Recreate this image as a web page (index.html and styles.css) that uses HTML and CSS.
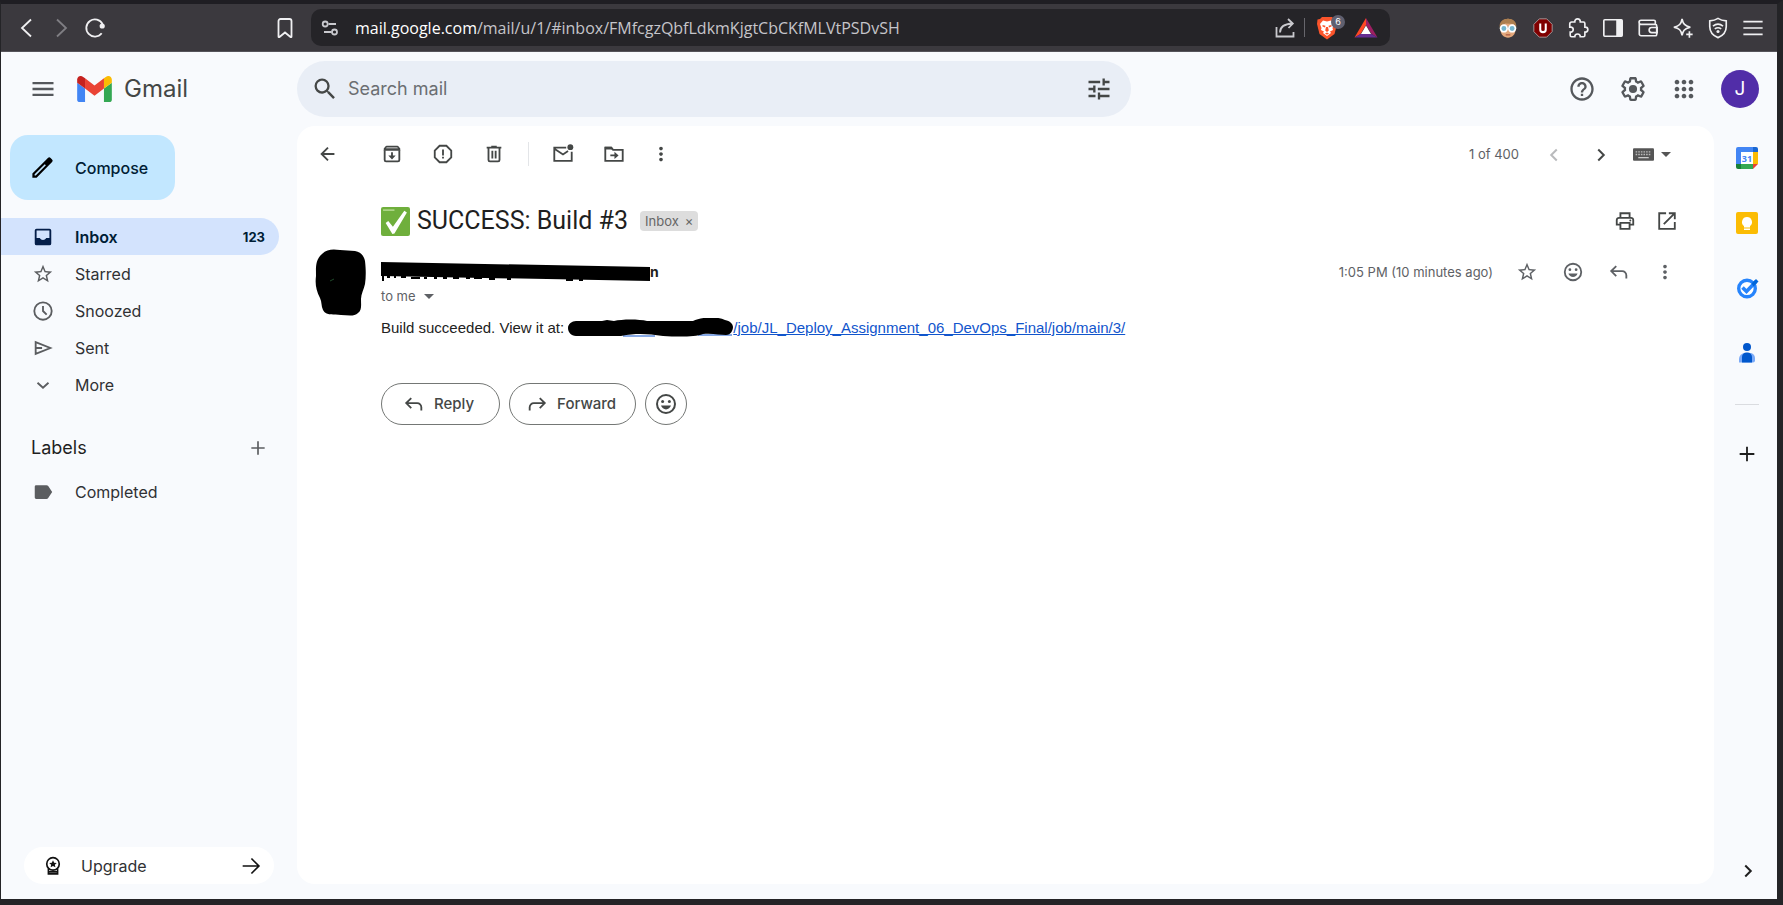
FILE: index.html
```html
<!DOCTYPE html>
<html lang="en">
<head>
<meta charset="utf-8">
<title>SUCCESS: Build #3 - Gmail</title>
<link rel="stylesheet" href="styles.css">
</head>
<body>
<svg class="sprite" aria-hidden="true">
  <symbol id="menu" viewBox="0 0 24 24"><path d="M3 18h18v-2H3v2zm0-5h18v-2H3v2zm0-7v2h18V6H3z"/></symbol>
  <symbol id="search" viewBox="0 0 24 24"><path d="M15.5 14h-.79l-.28-.27A6.471 6.471 0 0 0 16 9.5 6.5 6.5 0 1 0 9.5 16c1.61 0 3.09-.59 4.23-1.57l.27.28v.79l5 4.99L20.49 19l-4.99-5zm-6 0C7.01 14 5 11.99 5 9.5S7.01 5 9.5 5 14 7.01 14 9.5 11.99 14 9.5 14z"/></symbol>
  <symbol id="tune" viewBox="0 0 24 24"><path d="M3 17v2h6v-2H3zM3 5v2h10V5H3zm10 16v-2h8v-2h-8v-2h-2v6h2zM7 9v2H3v2h4v2h2V9H7zm14 4v-2H11v2h10zm-6-4h2V7h4V5h-4V3h-2v6z"/></symbol>
  <symbol id="star" viewBox="0 0 24 24"><path d="M22 9.24l-7.19-.62L12 2 9.19 8.63 2 9.24l5.46 4.73L5.82 21 12 17.27 18.18 21l-1.63-7.03L22 9.24zM12 15.4l-3.76 2.27 1-4.28-3.32-2.88 4.38-.38L12 6.1l1.71 4.04 4.38.38-3.32 2.88 1 4.28L12 15.4z"/></symbol>
  <symbol id="smile" viewBox="0 0 24 24"><circle cx="12" cy="12" r="9" fill="none" stroke="currentColor" stroke-width="2"/><circle cx="8.6" cy="9.5" r="1.5"/><circle cx="15.4" cy="9.5" r="1.5"/><path d="M7 13.6h10c-.8 2.3-2.7 3.9-5 3.9s-4.200-1.600-5-3.900z"/></symbol>
  <symbol id="reply" viewBox="0 0 24 24"><path d="M9 5.500L3.500 11 9 16.500M4 11h11.500a4.500 4.500 0 0 1 4.500 4.500V19" fill="none" stroke="currentColor" stroke-width="2"/></symbol>
  <symbol id="dots" viewBox="0 0 24 24"><path d="M12 8c1.100 0 2-.9 2-2s-.9-2-2-2-2 .9-2 2 .9 2 2 2zm0 2c-1.100 0-2 .9-2 2s.9 2 2 2 2-.9 2-2-.9-2-2-2zm0 6c-1.100 0-2 .9-2 2s.9 2 2 2 2-.9 2-2-.9-2-2-2z"/></symbol>
  <symbol id="right" viewBox="0 0 24 24"><path d="M9 6l6 6-6 6" fill="none" stroke="currentColor" stroke-width="2.200"/></symbol>
  <symbol id="plus" viewBox="0 0 24 24"><path d="M12 4v16M4 12h16" fill="none" stroke="currentColor" stroke-width="2"/></symbol>
  <symbol id="caret" viewBox="0 0 10 5"><path d="M0 0h10L5 5z"/></symbol>
</svg>

<header class="browser">
  <nav class="browser-nav">
    <button class="ib" aria-label="Back"><svg viewBox="0 0 24 24"><path class="ln" d="M16 3.500L7 12l9 8.500"/></svg></button>
    <button class="ib dim" aria-label="Forward"><svg viewBox="0 0 24 24"><path class="ln" d="M8 3.500l9 8.500-9 8.500"/></svg></button>
    <button class="ib" aria-label="Reload"><svg viewBox="0 0 24 24"><path class="ln" d="M18.700 17.300A8.600 8.600 0 1 1 19.600 8.200"/><circle cx="19.200" cy="10" r="2.600"/></svg></button>
  </nav>
  <button class="ib bookmark" aria-label="Bookmark"><svg viewBox="0 0 24 24"><path class="ln" d="M5.500 5a2 2 0 0 1 2-2h9a2 2 0 0 1 2 2v15.500a.6.6 0 0 1-1 .5L12 16.500 6.500 21a.6.6 0 0 1-1-.5z"/></svg></button>
  <div class="address">
    <button class="ib soft" aria-label="Site settings"><svg viewBox="0 0 24 24"><path class="ln" d="M10.500 8H18M6 16h7.500"/><circle class="ln" cx="7.200" cy="8" r="2.500"/><circle class="ln" cx="16.500" cy="16" r="2.500"/></svg></button>
    <p class="url"><b>mail.google.com</b>/mail/u/1/#inbox/FMfcgzQbfLdkmKjgtCbCKfMLVtPSDvSH</p>
    <button class="ib soft" aria-label="Share"><svg viewBox="0 0 24 24"><path class="ln" d="M3.500 11v9.500h17V16M7 16.500c0-5 3.500-8.500 12.500-9M15 3l4.800 4.500L15.500 12"/></svg></button>
    <span class="address-line"></span>
    <button class="ib shield" aria-label="Brave Shields"><svg viewBox="0 0 24 24"><path fill="#fb542b" d="M7 1h10l2 2 2.500.5L22 8l-2.500 10L12 23.500 4.500 18 2 8l.5-4.500L5 3z"/><path fill="#fff" d="M8 4.500l4 1 4-1 3 3.500-1.500 4 .5 2-3 1.500 1 1.500-4 3-4-3 1-1.500L6 14l.5-2L5 8z"/><path fill="#fb542b" d="M7.500 9l3 .8-.5 1.700-2.500-1zM16.500 9l-3 .8.500 1.700 2.500-1zM11 11h2l.8 3.500L12 16l-1.800-1.500zM10 17.500l2-1 2 1-2 1.300z"/></svg><span class="badge">6</span></button>
    <button class="ib" aria-label="Brave Rewards"><svg viewBox="0 0 24 24"><path fill="#ff4724" d="M12 2L.5 21.500l6-3.500L12 9z"/><path fill="#9e1f63" d="M12 2l11.500 19.500-6-3.500L12 9z"/><path fill="#662d91" d="M.5 21.500h23l-6-3.500h-11z"/><path fill="#fff" d="M12 9.500l5 8.500H7z"/></svg></button>
  </div>
  <nav class="extensions">
    <button class="ib" aria-label="Avatar extension"><svg viewBox="0 0 24 24"><path fill="#e3a87c" d="M4 9a8 7 0 0 1 16 0v6c0 4-3.500 7.500-8 7.500S4 19 4 15z"/><path fill="#ad7f4f" d="M3 12C2 5 6.500 2 12 2s10 3 9 10l-3-4.500-9-.5z"/><path fill="#555" d="M2 10.500h20v2.500H2z"/><circle cx="7.500" cy="12.500" r="3.600" fill="#75b6cf" stroke="#fff" stroke-width="1.800"/><circle cx="16.500" cy="12.500" r="3.600" fill="#75b6cf" stroke="#fff" stroke-width="1.800"/><path d="M9.500 19.500h5" stroke="#a34d39" stroke-width="1.200"/></svg></button>
    <button class="ib" aria-label="uBlock Origin"><svg viewBox="0 0 24 24"><path fill="#800000" stroke="#a7a0a2" d="M8 2h8l6 6v8l-6 6H8l-6-6V8z"/><path fill="none" stroke="#fff" stroke-width="2.200" d="M9 7v6.500a3 3 0 0 0 6 0V7"/></svg></button>
    <button class="ib" aria-label="Extensions"><svg viewBox="0 0 24 24"><path class="ln" d="M3 7.500a2 2 0 0 1 2-2h3.500V5a3 3 0 0 1 6 0v.5H18a1.500 1.500 0 0 1 1.500 1.500v4h.5a2.500 2.500 0 0 1 0 5.500h-.5V20a1.500 1.500 0 0 1-1.500 1.500h-3.500a3 3 0 0 0-6 0H5A1.500 1.500 0 0 1 3.500 20v-3.500h1a2.800 2.800 0 0 0 0-5.500H3z"/></svg></button>
    <button class="ib" aria-label="Side panel"><svg viewBox="0 0 24 24"><rect class="ln" x="2" y="3" width="20" height="18" rx="1"/><path d="M15.500 3H22v18h-6.500z"/></svg></button>
    <button class="ib" aria-label="Wallet"><svg viewBox="0 0 24 24"><path class="ln" d="M20 8V5a1.500 1.500 0 0 0-1.500-1.500H4.500a2 2 0 0 0 0 4.500H20a1.500 1.500 0 0 1 1.500 1.500V19a1.500 1.500 0 0 1-1.500 1.500H4.500a2 2 0 0 1-2-2V6M22 11.500h-6a2.500 2.500 0 0 0 0 5.500h6z"/></svg></button>
    <button class="ib" aria-label="Leo AI"><svg viewBox="0 0 24 24"><path class="ln" d="M11 2c1 5.500 3 7.700 9 9.200-3.500.8-5.500 1.800-6.800 3.300-1.200 1.500-1.700 3-2.200 5.500-1-5.500-3-7.700-9-8.800 6-1.200 8-3.700 9-9.200z"/><path class="ln" d="M19 15.500v7M15.500 19h7"/></svg></button>
    <button class="ib" aria-label="VPN"><svg viewBox="0 0 24 24"><path class="ln" d="M12 1.500c2.500 1.600 5.500 2.500 9 2.800v6c0 6.200-3.500 9.900-9 12.200-5.500-2.300-9-6-9-12.200v-6c3.500-.3 6.500-1.200 9-2.800z"/><path class="ln" d="M6.500 10c3.500-2.700 7.500-2.700 11 0M8.500 13c2.300-1.700 4.700-1.700 7 0"/><circle cx="12" cy="15.800" r="1.700"/></svg></button>
    <button class="ib" aria-label="Browser menu"><svg viewBox="0 0 24 24"><path class="ln" d="M1.500 5h21M1.500 12h21M1.500 19h21"/></svg></button>
  </nav>
</header>

<div class="app">
  <header class="top">
    <div class="brand">
      <button class="ib i28" aria-label="Main menu"><svg><use href="#menu"/></svg></button>
      <a class="logo" href="#inbox"><svg viewBox="52 42 88 66" aria-hidden="true"><path fill="#4285f4" d="M58 108h14V74L52 59v43c0 3.320 2.690 6 6 6"/><path fill="#34a853" d="M120 108h14c3.320 0 6-2.690 6-6V59l-20 15"/><path fill="#fbbc04" d="M120 48v26l20-15v-8c0-7.420-8.470-11.650-14.400-7.200"/><path fill="#ea4335" d="M72 74V48l24 18 24-18v26L96 92"/><path fill="#c5221f" d="M52 51v8l20 15V48l-5.600-4.200c-5.940-4.450-14.400-.22-14.400 7.200"/></svg>Gmail</a>
    </div>
    <form class="search">
      <button class="ib i28" type="button" aria-label="Search"><svg><use href="#search"/></svg></button>
      <input type="text" aria-label="Search mail" placeholder="Search mail">
      <button class="ib i28" type="button" aria-label="Show search options"><svg><use href="#tune"/></svg></button>
    </form>
    <div class="account">
      <button class="ib i28" aria-label="Support"><svg viewBox="0 0 24 24"><path d="M11 18h2v-2h-2v2zm1-16C6.480 2 2 6.480 2 12s4.480 10 10 10 10-4.480 10-10S17.520 2 12 2zm0 18c-4.410 0-8-3.590-8-8s3.590-8 8-8 8 3.590 8 8-3.590 8-8 8zm0-14c-2.210 0-4 1.790-4 4h2c0-1.100.9-2 2-2s2 .9 2 2c0 2-3 1.750-3 5h2c0-2.250 3-2.500 3-5 0-2.210-1.790-4-4-4z"/></svg></button>
      <button class="ib i28" aria-label="Settings"><svg viewBox="0 0 24 24"><path d="M13.850 22.250h-3.700c-.74 0-1.360-.54-1.450-1.270l-.27-1.890c-.27-.14-.53-.29-.79-.46l-1.800.72c-.7.260-1.470-.03-1.810-.65L2.200 15.530c-.35-.66-.2-1.440.36-1.880l1.530-1.190c-.01-.15-.02-.3-.02-.46 0-.15.010-.31.020-.46l-1.520-1.190c-.59-.45-.74-1.260-.37-1.880l1.850-3.190c.34-.62 1.110-.9 1.790-.63l1.810.73c.26-.17.52-.32.78-.46l.27-1.910c.09-.7.710-1.250 1.440-1.250h3.700c.74 0 1.360.54 1.450 1.270l.27 1.890c.27.140.53.290.79.460l1.800-.72c.71-.26 1.480.03 1.820.65l1.840 3.180c.36.660.2 1.440-.36 1.880l-1.520 1.190c.01.150.020.3.020.460s-.01.310-.02.460l1.520 1.190c.56.450.72 1.230.37 1.860l-1.860 3.220c-.34.620-1.110.9-1.800.630l-1.800-.72c-.26.170-.52.320-.78.460l-.27 1.910c-.1.680-.72 1.220-1.460 1.220zm-3.230-2h2.760l.37-2.550.53-.22c.44-.18.880-.44 1.340-.78l.45-.34 2.380.96 1.380-2.400-2.030-1.580.07-.56c.03-.26.060-.51.060-.78s-.03-.53-.06-.78l-.07-.56 2.030-1.580-1.390-2.400-2.390.96-.45-.35c-.42-.32-.87-.58-1.330-.77l-.52-.22-.37-2.550h-2.760l-.37 2.550-.53.210c-.44.190-.88.440-1.340.790l-.45.330-2.380-.95-1.390 2.390 2.030 1.580-.07.560a7 7 0 0 0-.06.790c0 .26.020.53.060.780l.07.560-2.030 1.580 1.380 2.400 2.390-.96.450.350c.43.330.86.580 1.330.770l.53.220.38 2.550z"/><circle cx="12" cy="12" r="3.500"/></svg></button>
      <button class="ib i28" aria-label="Google apps"><svg viewBox="0 0 24 24"><path d="M6 8c1.100 0 2-.9 2-2s-.9-2-2-2-2 .9-2 2 .9 2 2 2zm6 12c1.100 0 2-.9 2-2s-.9-2-2-2-2 .9-2 2 .9 2 2 2zm-6 0c1.100 0 2-.9 2-2s-.9-2-2-2-2 .9-2 2 .9 2 2 2zm0-6c1.100 0 2-.9 2-2s-.9-2-2-2-2 .9-2 2 .9 2 2 2zm6 0c1.100 0 2-.9 2-2s-.9-2-2-2-2 .9-2 2 .9 2 2 2zm4-8c0 1.100.9 2 2 2s2-.9 2-2-.9-2-2-2-2 .9-2 2zm-4 2c1.100 0 2-.9 2-2s-.9-2-2-2-2 .9-2 2 .9 2 2 2zm6 6c1.100 0 2-.9 2-2s-.9-2-2-2-2 .9-2 2 .9 2 2 2zm0 6c1.100 0 2-.9 2-2s-.9-2-2-2-2 .9-2 2 .9 2 2 2z"/></svg></button>
      <button class="me" aria-label="Google Account">J</button>
    </div>
  </header>

  <aside class="sidebar">
    <button class="compose"><svg viewBox="0 0 24 24" aria-hidden="true"><path d="M3 17.250V21h3.750L20.500 7.200a1.700 1.700 0 0 0 0-2.400l-1.300-1.300a1.700 1.700 0 0 0-2.400 0zM6 19H5v-1l9-9 1 1z" fill-rule="evenodd"/></svg>Compose</button>
    <nav class="folders">
      <a class="folder current" href="#inbox"><svg viewBox="0 0 24 24"><path fill-rule="evenodd" d="M5 3h14a2 2 0 0 1 2 2v14a2 2 0 0 1-2 2H5a2 2 0 0 1-2-2V5a2 2 0 0 1 2-2zm0 2v8h3.500c.7 1.300 2 2.200 3.500 2.200s2.800-.9 3.500-2.200H19V5z"/></svg>Inbox<span class="count">123</span></a>
      <a class="folder" href="#starred"><svg><use href="#star"/></svg>Starred</a>
      <a class="folder" href="#snoozed"><svg viewBox="0 0 24 24"><circle class="ln2" cx="12" cy="12" r="9.500"/><path class="ln2" d="M12 6.500V12l4 4"/></svg>Snoozed</a>
      <a class="folder" href="#sent"><svg viewBox="0 0 24 24"><path class="ln2" d="M4 5.500v13L20 12zM4 12h7"/></svg>Sent</a>
      <a class="folder" href="#more"><svg viewBox="0 0 24 24"><path class="ln2" d="M6 9.500l6 5.500 6-5.500"/></svg>More</a>
    </nav>
    <div class="labels-head"><h2>Labels</h2><button class="ib i20" aria-label="Create new label"><svg><use href="#plus"/></svg></button></div>
    <nav class="folders">
      <a class="folder" href="#label"><svg viewBox="0 0 24 24"><path d="M4.500 4.500h11.300c.8 0 1.400.3 1.900 1L22 12l-4.300 6.500c-.5.700-1.100 1-1.900 1H4.500A1.500 1.500 0 0 1 3 18V6a1.500 1.500 0 0 1 1.500-1.500z"/></svg>Completed</a>
    </nav>
    <a class="upgrade" href="#upgrade"><svg class="medal" viewBox="0 0 24 24"><circle class="ln2" cx="12" cy="9.500" r="7.500"/><path class="ln2" d="M6.500 15v6.500h11V15M6 19h12"/><path d="M12 5l1.400 3 3.100.3-2.300 2.100.7 3.100-2.900-1.600-2.900 1.600.7-3.100-2.300-2.100 3.100-.3z"/></svg>Upgrade<svg class="arrow" viewBox="0 0 24 24"><path class="ln2" d="M2 12h19M12.500 3l9 9-9 9"/></svg></a>
  </aside>

  <main class="mail">
    <div class="toolbar">
      <button class="ib back" aria-label="Back to Inbox"><svg viewBox="0 0 24 24"><path class="ln2" d="M12 5l-7 7 7 7M5.500 12H19"/></svg></button>
      <button class="ib" aria-label="Archive"><svg viewBox="0 0 24 24"><path class="ln2" d="M4 8v10.500A1.500 1.500 0 0 0 5.500 20h13a1.500 1.500 0 0 0 1.500-1.500V8"/><path d="M3 8.500V6l2-2.500 1-.5h12l1 .5L21 6v2.500zM5.500 5.800h13l-.7-.8H6.200z" fill-rule="evenodd"/><path d="M11 10h2v3.500h3L12 18l-4-4.500h3z"/></svg></button>
      <button class="ib" aria-label="Report spam"><svg viewBox="0 0 24 24"><path class="ln2" d="M8.300 3h7.400L21 8.300v7.400L15.700 21H8.300L3 15.700V8.300z"/><path d="M11 7h2v6.500h-2zM11 15h2v2h-2z"/></svg></button>
      <button class="ib" aria-label="Delete"><svg viewBox="0 0 24 24"><path class="ln2" d="M6 5.500v13A1.500 1.500 0 0 0 7.500 20h9a1.500 1.500 0 0 0 1.500-1.500v-13M4 5h16M9 4h6M10.200 8.500v8.500M13.800 8.500v8.500"/></svg></button>
      <span class="divider"></span>
      <button class="ib" aria-label="Mark as unread"><svg viewBox="0 0 24 24"><path class="ln2" d="M15.500 5H2.500v14.500h19V9.500M3 6.500l9 6 5.500-3.700"/><circle cx="20" cy="4.500" r="3.200"/></svg></button>
      <button class="ib" aria-label="Move to"><svg viewBox="0 0 24 24"><path class="ln2" d="M2.500 19.500V5h6.500l2 2.500h10.500v12z"/><path d="M2 4h7.500l2 3H2zM8 12.500h4.500V9.500l4.500 4-4.500 4v-3H8z"/></svg></button>
      <button class="ib last" aria-label="More"><svg><use href="#dots"/></svg></button>
      <div class="pager">
        <span>1 of 400</span>
        <button class="ib i20 flip faint" aria-label="Newer" disabled><svg><use href="#right"/></svg></button>
        <button class="ib i20 older" aria-label="Older"><svg><use href="#right"/></svg></button>
        <button class="keys" aria-label="Select input tool"><svg class="board" viewBox="0 0 20 12"><rect width="20" height="12" rx="1"/><path d="M2.500 3.500h15M2.500 6h15" stroke="#bbb" stroke-width="1.200" stroke-dasharray="1.500 1"/><path d="M5 9h10" stroke="#ccc" stroke-width="1.200"/></svg><svg class="caret"><use href="#caret"/></svg></button>
      </div>
    </div>

    <div class="subject">
      <svg class="check" viewBox="0 0 28 28" role="img" aria-label="Check mark"><rect width="28" height="28" rx="2" fill="#6faf3c"/><path d="M2 3h11" stroke="#b3d98e" stroke-width="1.500"/><path d="M4.500 15.500l2.500-2 4.500 5.500L22.500 3.500l2.500 1.700-12 20.300-2 .5z" fill="#fff"/></svg>
      <h1>SUCCESS: Build #3</h1>
      <span class="chip">Inbox<button aria-label="Remove label Inbox">×</button></span>
      <div class="subject-tools">
        <button class="ib" aria-label="Print all"><svg viewBox="0 0 24 24"><path class="ln2" d="M7 8V3.500h10V8M6.500 16H3v-5a2.500 2.500 0 0 1 2.500-2.500h13A2.500 2.500 0 0 1 21 11v5h-3.500M7 14h10v6.500H7z"/><circle cx="17.800" cy="11.500" r="1.100"/></svg></button>
        <button class="ib" aria-label="Open in new window"><svg viewBox="0 0 24 24"><path class="ln2" d="M11 3.500H3.500v17h17V13M14 3.500h6.500V10M20 4L8.500 15.500"/></svg></button>
      </div>
    </div>

    <article class="message">
      <svg class="face" viewBox="0 0 51 68" aria-hidden="true"><path d="M7 5C12 0 18 0 25 1l15 1c6 1 9 5 10 10 1 9 1 16 0 23-1 5-4 10-4 15 0 6 1 11-3 14-4 4-11 2-17 2-7-1-15 1-18-5-2-4-1-8-3-12-4-8-5-14-4-22C1 19 0 11 7 5z"/><path d="M15 32l4-2" stroke="#1f4a2a" fill="none"/></svg>
      <div class="message-main">
        <div class="sender">
          <svg class="strike" viewBox="0 0 269 20" role="img" aria-label="Hidden sender"><path d="M0 0l269 5v14L0 14z"/><path d="M2 14v5M6 15h3M13 15h2M20 15h5M30 16h9M43 16h3M53 16h3M62 16h4M72 16h6M85 16h4M93 16h8M108 17h6M126 17h4M185 18h7M198 18h4" stroke="#000" stroke-width="2" fill="none"/></svg><strong>n</strong>
          <div class="sender-tools">
            <time>1:05 PM (10 minutes ago)</time>
            <button class="ib" aria-label="Star"><svg><use href="#star"/></svg></button>
            <button class="ib" aria-label="Add reaction"><svg><use href="#smile"/></svg></button>
            <button class="ib" aria-label="Reply"><svg><use href="#reply"/></svg></button>
            <button class="ib" aria-label="More options"><svg><use href="#dots"/></svg></button>
          </div>
        </div>
        <button class="to">to me<svg class="caret"><use href="#caret"/></svg></button>
        <p class="body">Build succeeded. View it at: <a href="#job"><svg class="redact" viewBox="0 0 165 19" aria-hidden="true"><path d="M55 18h32M130 17h34" stroke="#1155cc" stroke-width="1"/><path d="M8 3h26l5-1 7 1c8-2 25-2 33 0h46c8-4 24-5 32-1 5 1 8 4 8 7s-2 8-7 8c-6 0-14-2-23-1-8 3-24 3-40 2-15-2-26-3-42 0H8C3 18 0 14 0 10s4-7 8-7z"/></svg>/job/JL_Deploy_Assignment_06_DevOps_Final/job/main/3/</a></p>
        <div class="actions">
          <button class="pill"><svg><use href="#reply"/></svg>Reply</button>
          <button class="pill forward"><svg class="flip"><use href="#reply"/></svg>Forward</button>
          <button class="pill round" aria-label="Add emoji reaction"><svg><use href="#smile"/></svg></button>
        </div>
      </div>
    </article>
  </main>

  <aside class="panel">
    <button class="ib i28" aria-label="Calendar"><svg viewBox="0 0 28 28"><path fill="#4285f4" d="M3 5a2 2 0 0 1 2-2h15v5H8v12H3z"/><path fill="#1967d2" d="M20 3h3a2 2 0 0 1 2 2v3h-5z"/><path fill="#fbbc04" d="M20 8h5v12h-5z"/><path fill="#34a853" d="M8 20h12v5H8z"/><path fill="#188038" d="M3 20h5v5H5a2 2 0 0 1-2-2z"/><path fill="#ea4335" d="M20 20h5l-5 5z"/><path fill="#fff" d="M8 8h12v12H8z"/><text x="14" y="18" text-anchor="middle" class="day">31</text></svg></button>
    <button class="ib i28" aria-label="Keep"><svg viewBox="0 0 28 28"><rect x="3" y="3" width="22" height="22" rx="2" fill="#fbbc04"/><path fill="#fff" d="M14 8a5 5 0 0 0-3 9v1.500h6V17a5 5 0 0 0-3-9zM11 19.500h6V21h-6z"/></svg></button>
    <button class="ib i28" aria-label="Tasks"><svg viewBox="0 0 28 28"><circle cx="14" cy="14.500" r="8.300" fill="#fff" stroke="#2684fc" stroke-width="3.400"/><path d="M9.500 13.500l4 4 9.500-10" fill="none" stroke="#2684fc" stroke-width="3.600"/><path d="M18.500 9.500l4.500-4.500 2.500 2.500-5 5z" fill="#0066da"/></svg></button>
    <button class="ib i28" aria-label="Contacts"><svg viewBox="0 0 28 28"><circle cx="14" cy="8" r="4" fill="#0057cc"/><path fill="#7baaf7" d="M6 23.500V20a6 6 0 0 1 6-6h5a5 5 0 0 1 5 5v2.500a2 2 0 0 1-2 2z"/><path fill="#0057cc" d="M9 18a4.500 4.500 0 0 1 4.500-4.500h1A4.500 4.500 0 0 1 19 18v5.500H9z"/></svg></button>
    <span class="panel-line"></span>
    <button class="ib dark" aria-label="Get Add-ons"><svg><use href="#plus"/></svg></button>
    <button class="ib i20 dark hide" aria-label="Hide side panel"><svg><use href="#right"/></svg></button>
  </aside>
</div>
</body>
</html>
```
FILE: styles.css
```css
* { box-sizing: border-box; }

body {
  margin: 0;
  height: 100vh;
  display: flex;
  flex-direction: column;
  border: solid #242427;
  border-width: 4px 6px 6px 1px;
  border-top-color: #1f1e23;
  background: #f8fafd;
  color: #1f1f1f;
  font-family: Inter, "Open Sans", sans-serif;
  font-size: 15px;
  line-height: 20px;
  overflow: hidden;
}

button, input { font: inherit; color: inherit; border: 0; padding: 0; background: none; }
a { color: inherit; text-decoration: none; }
h1, h2, p { margin: 0; font-weight: 400; }
svg { display: block; flex: none; fill: currentColor; }
.sprite { width: 0; height: 0; position: absolute; }
.ln { fill: none; stroke: currentColor; stroke-width: 1.8; }
.ln2 { fill: none; stroke: currentColor; stroke-width: 2; }
.flip { transform: scaleX(-1); }

.ib { flex: none; display: grid; place-items: center; width: 24px; height: 24px; }
.ib svg { width: 24px; height: 24px; }
.ib.i20, .i20 svg { width: 20px; height: 20px; }
.ib.i28, .i28 svg { width: 28px; height: 28px; }

/* Browser chrome */
.browser {
  flex: none;
  display: flex;
  align-items: center;
  height: 48px;
  padding: 0 12px 0 14px;
  background: #3b393e;
  border-bottom: 1px solid #55545a;
  color: #f0f0f2;
}
.browser-nav { display: flex; gap: 10px; }
.dim { color: #7f7e83; }
.bookmark { margin: 0 14px 0 166px; }
.address {
  flex: 0 1 1079px;
  min-width: 0;
  display: flex;
  align-items: center;
  height: 37px;
  padding: 0 12px 0 7px;
  border-radius: 10px;
  background: #252428;
}
.soft { color: #c9c9ce; }
.url {
  flex: 1;
  min-width: 0;
  margin-left: 13px;
  overflow: hidden;
  white-space: nowrap;
  font: 16px/24px "Open Sans", sans-serif;
  color: #c5c5ca;
}
.url b { font-weight: 400; color: #fff; }
.address-line { width: 1px; height: 19px; margin: 0 10px 0 7px; background: #67666c; }
.shield { position: relative; margin-right: 15px; }
.badge {
  position: absolute;
  top: -1px;
  right: -6px;
  width: 14px;
  height: 14px;
  border-radius: 7px;
  background: #5f6070;
  color: #fff;
  font-size: 9px;
  line-height: 14px;
}
.extensions { display: flex; gap: 11px; margin-left: auto; }
.extensions svg { width: 22px; height: 22px; }

/* Gmail shell */
.app {
  flex: 1;
  min-height: 0;
  display: grid;
  grid-template-columns: 296px minmax(0, 1fr) 63px;
  grid-template-rows: 74px minmax(0, 1fr);
}
.top { grid-column: 1 / -1; display: flex; align-items: center; color: #55585c; }
.brand { flex: none; display: flex; align-items: center; width: 296px; padding-left: 28px; }
.logo { display: flex; align-items: center; gap: 12px; margin-left: 20px; font-size: 24px; line-height: 28px; color: #444746; }
.logo svg { width: 35px; height: 26px; }
.search {
  flex: 0 1 834px;
  display: flex;
  align-items: center;
  gap: 9px;
  height: 56px;
  padding: 0 18px 0 14px;
  border-radius: 28px;
  background: #e9eef6;
  color: #444746;
}
.search input { flex: 1; min-width: 0; font-size: 18px; line-height: 24px; outline: 0; }
.search input::placeholder { color: #6b6e72; opacity: 1; }
.account { display: flex; align-items: center; gap: 23px; margin-left: auto; padding-right: 18px; }
.me { width: 38px; height: 38px; border-radius: 50%; background: #512da8; color: #fff; font-size: 19px; }

.sidebar { display: flex; flex-direction: column; padding: 9px 18px 15px 0; font-size: 16px; }
.compose {
  flex: none;
  display: flex;
  align-items: center;
  gap: 19px;
  width: 165px;
  height: 65px;
  margin: 0 0 18px 9px;
  padding-left: 19px;
  border-radius: 18px;
  background: #c2e7ff;
  color: #001d35;
  font-weight: 500;
}
.compose svg { width: 27px; height: 27px; fill: #000; }
.folder {
  display: flex;
  align-items: center;
  height: 37px;
  gap: 21px;
  padding: 0 14px 0 31px;
  border-radius: 0 19px 19px 0;
  color: #303134;
}
.folder svg { width: 22px; height: 22px; color: #5b5d60; }
.current { background: #d3e3fd; color: #001d35; font-weight: 600; }
.current svg { color: #041e49; }
.count { margin-left: auto; font-size: 13px; font-weight: 700; }
.labels-head { display: flex; align-items: center; justify-content: space-between; height: 24px; margin: 33px 11px 13px 30px; }
.labels-head h2 { font-size: 18px; line-height: 24px; }
.labels-head svg { color: #5b5d60; }
.upgrade {
  display: flex;
  align-items: center;
  height: 37px;
  margin: auto 5px 0 23px;
  padding: 0 13px 0 19px;
  border-radius: 19px;
  background: #fff;
  color: #303134;
}
.upgrade svg { width: 20px; height: 20px; color: #111; }
.medal { margin-right: 18px; }
.arrow { margin-left: auto; }

/* Open message */
.mail { margin-bottom: 15px; border-radius: 18px; background: #fff; color: #444746; }
.toolbar { display: flex; align-items: center; gap: 27px; height: 56px; padding: 0 43px 0 19px; }
.toolbar svg { width: 22px; height: 22px; }
.back { margin-right: 13px; }
.divider { width: 1px; height: 24px; margin: 0 -5px; background: #e3e5e8; }
.last { margin-left: -4px; }
.pager { display: flex; align-items: center; margin-left: auto; font-size: 13px; color: #5e6165; }
.pager .flip { margin: 0 25px 0 26px; }
.pager .older { margin-right: 23px; color: #444746; }
.faint { color: #b9babc; }
.keys { display: flex; align-items: center; gap: 7px; color: #555; }
.toolbar .board { width: 21px; height: 13px; }
.caret, .toolbar .caret { width: 10px; height: 5px; }

.subject { display: flex; align-items: center; height: 40px; margin-top: 19px; padding: 0 35px 0 84px; }
.check { width: 29px; height: 29px; }
.subject h1 { margin: 0 12px 0 7px; font: 25px/32px Roboto, sans-serif; color: #1f1f1f; white-space: nowrap; }
.chip { display: flex; align-items: center; gap: 6px; height: 20px; padding: 0 5px; border-radius: 4px; background: #ddd; color: #666; font-size: 13px; }
.subject-tools { display: flex; gap: 18px; margin-left: auto; }
.subject-tools svg { width: 22px; height: 22px; }

.message { display: flex; gap: 15px; padding: 8px 37px 0 18px; }
.face { width: 51px; height: 68px; fill: #000; }
.message-main { flex: 1; min-width: 0; }
.sender { display: flex; align-items: center; height: 28px; margin-top: 9px; color: #1f1f1f; }
.strike { width: 269px; height: 20px; fill: #000; }
.sender strong { font-size: 14px; }
.sender-tools { display: flex; align-items: center; gap: 22px; margin-left: auto; color: #5e6165; font-size: 13px; }
.sender-tools svg { width: 22px; height: 22px; }
.to { display: flex; align-items: center; gap: 8px; font-size: 13px; color: #5e6165; }
.body { margin-top: 11px; font: 15px/22px "Liberation Sans", Arial, sans-serif; color: #222; }
.body a { color: #1155cc; text-decoration: underline; }
.redact { display: inline-block; width: 165px; height: 19px; fill: #000; vertical-align: -4px; }
.actions { display: flex; gap: 9px; margin-top: 44px; }
.pill { display: flex; align-items: center; gap: 9px; height: 42px; padding: 0 25px 0 21px; border: 1px solid #747775; border-radius: 21px; font-weight: 500; }
.pill svg { width: 22px; height: 22px; }
.forward { padding: 0 19px 0 16px; }
.round { width: 42px; padding: 0; justify-content: center; }
.round svg { width: 24px; height: 24px; }

/* Side panel */
.panel { display: flex; flex-direction: column; align-items: center; gap: 37px; padding: 18px 0 19px 3px; }
.day { font: 700 9px "Open Sans", sans-serif; fill: #4285f4; }
.panel-line { width: 24px; height: 1px; background: #dadce0; }
.dark { color: #1f1f1f; }
.dark svg { width: 22px; height: 22px; }
.hide { margin-top: auto; }
```
